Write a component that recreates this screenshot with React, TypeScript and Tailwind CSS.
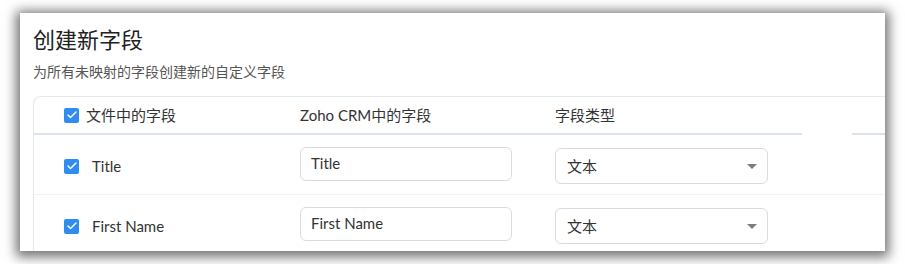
import { Check } from 'lucide-react';

const font = { fontFamily: 'Lato, "Noto Sans CJK SC", sans-serif' };

function Box() {
  return (
    <span className="flex h-[15px] w-[15px] items-center justify-center rounded-[2px] bg-[#2f8cf0]">
      <Check size={12} strokeWidth={3} className="text-white" />
    </span>
  );
}

function Row({ name }: { name: string }) {
  return (
    <div className="flex h-[60px] items-center border-b border-[#f1f2f4]">
      <div className="flex w-[266px] items-center gap-[13px] pl-[30px] pt-[3px]">
        <Box />
        <span className="text-[15px] text-[#333]">{name}</span>
      </div>
      <div className="w-[255px] pb-[2px]">
        <div className="flex h-[34px] w-[212px] items-center rounded-[6px] border border-[#d8dbe0] px-[10px] text-[15px] text-[#333]">
          {name}
        </div>
      </div>
      <div className="pt-[3px]">
        <div className="flex h-[36px] w-[213px] items-center justify-between rounded-[6px] border border-[#d8dbe0] pl-[11px] pr-[10px] text-[15px] text-[#333]">
          <span>文本</span>
          <span className="h-0 w-0 border-x-[5px] border-t-[5px] border-x-transparent border-t-[#7a7d82]" />
        </div>
      </div>
    </div>
  );
}

export default function App() {
  return (
    <div className="h-[264px] w-[905px] overflow-hidden bg-white pl-[20px] pt-[13px]" style={font}>
      <div className="h-[238px] w-[865px] overflow-hidden bg-white pl-[13px] pt-[12px] shadow-[0_2px_11px_4px_rgba(0,0,0,0.55)]">
        <h1 className="text-[22px] leading-[30px] text-[#222]">创建新字段</h1>
        <p className="mt-[7px] text-[14px] leading-[20px] text-[#555]">为所有未映射的字段创建新的自定义字段</p>
        <div className="mt-[14px] w-[900px] rounded-tl-[8px] border-l border-t border-[#e4e9f0]">
          <div className="flex h-[36px] items-center text-[15px] text-[#333]">
            <div className="flex w-[266px] items-center gap-[7px] pl-[30px]">
              <Box />
              <span>文件中的字段</span>
            </div>
            <div className="w-[255px]">Zoho CRM中的字段</div>
            <div>字段类型</div>
          </div>
          <div className="flex gap-[50px]">
            <div className="h-[2px] w-[768px] bg-[#dbe4ee]" />
            <div className="h-[2px] flex-1 bg-[#dbe4ee]" />
          </div>
          <Row name="Title" />
          <Row name="First Name" />
        </div>
      </div>
    </div>
  );
}
